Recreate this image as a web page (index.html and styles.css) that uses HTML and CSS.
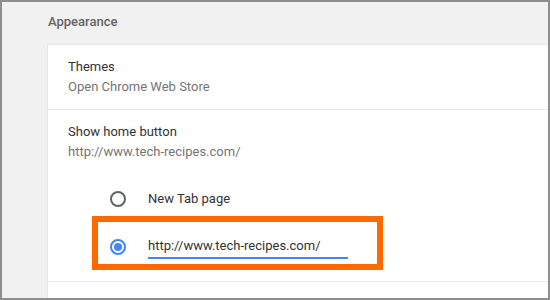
FILE: index.html
```html
<!doctype html>
<html lang="en">
<head>
	<meta charset="UTF-8">
	<title>Appearance</title>
	<link rel="stylesheet" href="styles.css">
</head>
<body>
	<div class="frame">
		<h2 class="section-title">Appearance</h2>
		<div class="card">
			<div class="row">
				<div class="label">Themes</div>
				<div class="sub">Open Chrome Web Store</div>
			</div>
			<div class="row row-last">
				<div class="label">Show home button</div>
				<div class="sub">http://www.tech-recipes.com/</div>
				<div class="options">
					<div class="option option-first">
						<span class="radio"></span>
						<span class="option-text">New Tab page</span>
					</div>
					<div class="option option-marked">
						<span class="radio radio-on"></span>
						<span class="url-input">http://www.tech-recipes.com/</span>
					</div>
				</div>
			</div>
			<div class="row-empty"></div>
		</div>
	</div>
</body>
</html>
```

FILE: styles.css
```css
*{
	margin: 0;
	padding: 0;
	box-sizing: border-box;
}
body{
	font-family: Roboto, "Liberation Sans", sans-serif;
	font-size: 13px;
	line-height: 20px;
}
.frame{
	width: 550px;
	height: 300px;
	border: 2px solid #8e8e8e;
	background-color: #f1f1f1;
	overflow: hidden;
}
.section-title{
	font-size: 13px;
	font-weight: 500;
	color: #646464;
	padding: 10px 0 0 46px;
	margin-bottom: 13px;
}
.card{
	margin-left: 46px;
	background-color: #fff;
	box-shadow: 0 0 0 1px #e6e6e6;
	height: 260px;
}
.row{
	padding: 12px 20px;
	border-bottom: 1px solid #ebebeb;
}
.label{
	color: #333;
}
.sub{
	color: #757575;
}
.row-last{
	padding-bottom: 17px;
}
.options{
	margin-top: 12px;
	margin-left: 30px;
	width: 279px;
}
.option{
	display: flex;
	align-items: center;
	padding-left: 12px;
}
.option-first{
	height: 48px;
	padding-top: 2px;
}
.option-marked{
	height: 42px;
	padding-top: 13px;
	padding-bottom: 5px;
	outline: 6px solid #ff6a00;
}
.radio{
	width: 16px;
	height: 16px;
	border: 2px solid #5f6368;
	border-radius: 50%;
	margin-right: 22px;
	flex-shrink: 0;
	position: relative;
}
.radio-on{
	border-color: #4285f4;
}
.radio-on:after{
	content: '';
	position: absolute;
	left: 2px;
	top: 2px;
	width: 8px;
	height: 8px;
	border-radius: 50%;
	background-color: #4285f4;
}
.option-text{
	color: #333;
}
.url-input{
	color: #333;
	width: 200px;
	border-bottom: 2px solid #4285f4;
	padding-bottom: 1px;
}
```
